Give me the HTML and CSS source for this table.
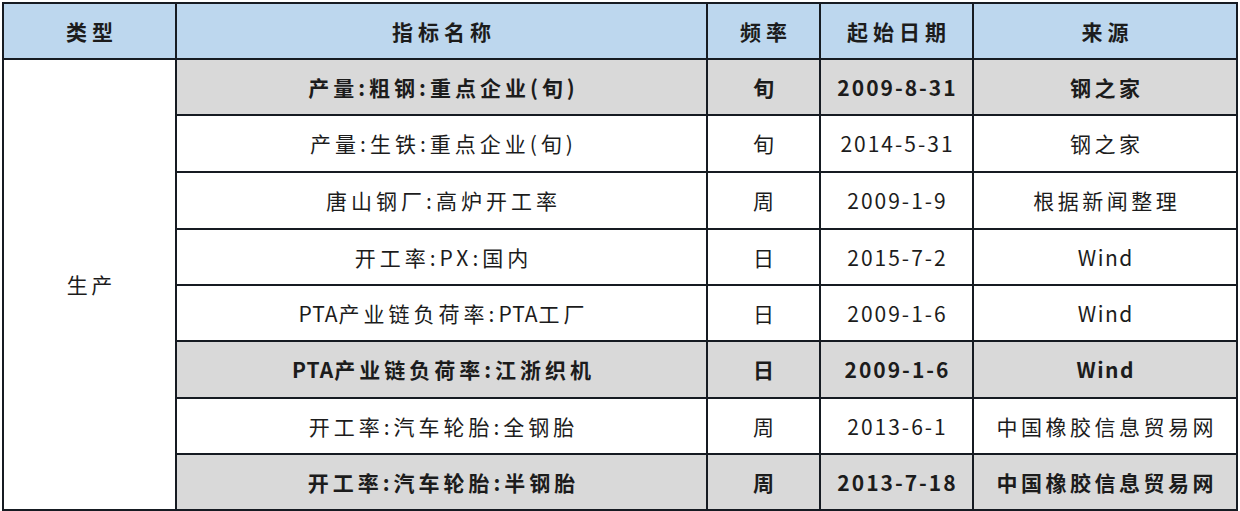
FILE: index.html
```html
<!DOCTYPE html>
<html lang="zh-CN">
<head>
<meta charset="utf-8">
<title>指标列表</title>
<link rel="stylesheet" href="styles.css">
</head>
<body>
<div class="sheet">
  <div class="cell head">类型</div>
  <div class="cell head">指标名称</div>
  <div class="cell head">频率</div>
  <div class="cell head">起始日期</div>
  <div class="cell head">来源</div>

  <div class="cell type">生产</div>

  <div class="cell hl name">产量:粗钢:重点企业(旬)</div>
  <div class="cell hl">旬</div>
  <div class="cell hl num">2009-8-31</div>
  <div class="cell hl">钢之家</div>

  <div class="cell name">产量:生铁:重点企业(旬)</div>
  <div class="cell">旬</div>
  <div class="cell num">2014-5-31</div>
  <div class="cell">钢之家</div>

  <div class="cell name">唐山钢厂:高炉开工率</div>
  <div class="cell">周</div>
  <div class="cell num">2009-1-9</div>
  <div class="cell">根据新闻整理</div>

  <div class="cell name">开工率:PX:国内</div>
  <div class="cell">日</div>
  <div class="cell num">2015-7-2</div>
  <div class="cell lat">Wind</div>

  <div class="cell name"><span class="abbr">PTA</span>产业链负荷率:<span class="abbr">PTA</span>工厂</div>
  <div class="cell">日</div>
  <div class="cell num">2009-1-6</div>
  <div class="cell lat">Wind</div>

  <div class="cell hl name"><span class="abbr">PTA</span>产业链负荷率:江浙织机</div>
  <div class="cell hl">日</div>
  <div class="cell hl num">2009-1-6</div>
  <div class="cell hl lat">Wind</div>

  <div class="cell name">开工率:汽车轮胎:全钢胎</div>
  <div class="cell">周</div>
  <div class="cell num">2013-6-1</div>
  <div class="cell">中国橡胶信息贸易网</div>

  <div class="cell hl name">开工率:汽车轮胎:半钢胎</div>
  <div class="cell hl">周</div>
  <div class="cell hl num">2013-7-18</div>
  <div class="cell hl">中国橡胶信息贸易网</div>
</div>
</body>
</html>
```
FILE: styles.css
```css
html, body {
  margin: 0;
  padding: 0;
  background: #ffffff;
}

body {
  padding: 2px 0 0 2px;
  font-family: "Noto Sans CJK SC", "Noto Sans", sans-serif;
  color: #1c1c1c;
}

.sheet {
  display: grid;
  grid-template-columns: 171px 529px 111px 151px 262px;
  grid-template-rows: 54px 54px 55px 55px 54px 54px 55px 54px 54px;
  gap: 2px;
  padding: 2px;
  width: max-content;
  background: #161b22;
}

.cell {
  display: flex;
  align-items: center;
  justify-content: center;
  background: #ffffff;
  font-size: 21px;
  letter-spacing: 3.5px;
  padding-left: 3.5px;
  line-height: 1;
  white-space: nowrap;
}

.head {
  background: #bdd7ee;
  font-weight: 700;
  letter-spacing: 5px;
  padding-left: 5px;
}

.type {
  grid-row: 2 / span 8;
  grid-column: 1;
}

.hl {
  background: #d9d9d9;
  font-weight: 700;
}

.name {
  letter-spacing: 4px;
  padding-left: 4px;
}

.abbr {
  letter-spacing: 1px;
}

.num {
  letter-spacing: 2px;
  padding-left: 2px;
}

.lat {
  letter-spacing: 1.5px;
  padding-left: 1.5px;
}
```
